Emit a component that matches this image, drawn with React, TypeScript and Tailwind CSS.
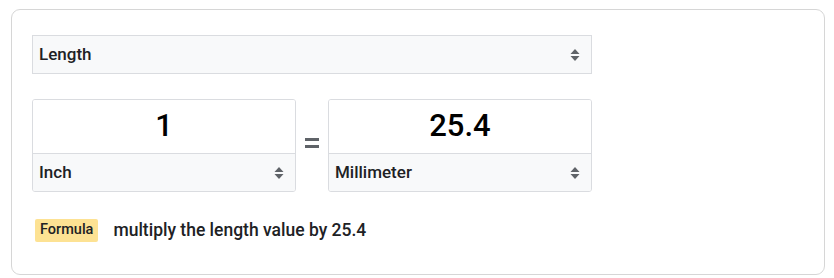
import React from 'react';

const Arrows = () => (
  <svg width="10" height="16" viewBox="0 0 10 16" className="shrink-0">
    <path d="M5 2 L9.5 7 L0.5 7 Z" fill="#5f6368" />
    <path d="M5 14 L9.5 9 L0.5 9 Z" fill="#5f6368" />
  </svg>
);

const Select = ({ label, className = '' }: { label: string; className?: string }) => (
  <div
    className={`flex items-center justify-between bg-[#f8f9fa] border border-[#dadce0] pl-[6px] pr-[11px] text-[17px] font-medium text-[#202124] ${className}`}
  >
    <span>{label}</span>
    <Arrows />
  </div>
);

const UnitBox = ({ value, unit }: { value: string; unit: string }) => (
  <div className="flex flex-col w-[264px] rounded-[3px] border border-[#dadce0] overflow-hidden">
    <div className="h-[53px] flex items-center justify-center bg-white text-[31px] font-medium text-black">
      {value}
    </div>
    <Select label={unit} className="h-[38px] border-0 border-t" />
  </div>
);

export default function App() {
  return (
    <div className="w-[834px] h-[278px] bg-white pt-[9px] pl-[11px]" style={{ fontFamily: 'Roboto, "Liberation Sans", sans-serif' }}>
      <div className="w-[814px] h-[266px] rounded-[9px] border border-[#d6d6d6] pl-[20px] pt-[25px]">
        <div className="w-[560px] flex flex-col">
          <Select label="Length" className="h-[39px]" />
          <div className="flex items-center mt-[25px]">
            <UnitBox value="1" unit="Inch" />
            <div className="w-[32px] flex flex-col items-center gap-[4px] pb-[6px]">
              <div className="w-[14px] h-[3px] bg-[#5f6368]" />
              <div className="w-[14px] h-[3px] bg-[#5f6368]" />
            </div>
            <UnitBox value="25.4" unit="Millimeter" />
          </div>
          <div className="flex items-center mt-[25px] pl-[3px]">
            <span className="bg-[#fde293] rounded-[2px] h-[23px] px-[5px] flex items-center text-[14.5px] font-medium text-[#202124]">
              Formula
            </span>
            <span className="ml-[15px] text-[17.5px] font-medium text-[#202124]">multiply the length value by 25.4</span>
          </div>
        </div>
      </div>
    </div>
  );
}
